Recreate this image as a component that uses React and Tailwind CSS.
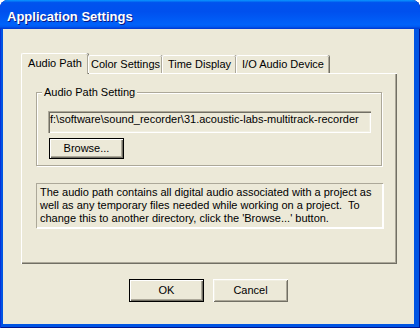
import { useState } from "react"

const tabs = ["Audio Path", "Color Settings", "Time Display", "I/O Audio Device"]

function Button({ children, isDefault, className = "" }) {
    return (
        <button
            className={`flex items-center justify-center bg-[#ece9d8] text-[11px] leading-[13px] text-black ${isDefault
                ? "border border-black shadow-[inset_1px_1px_0_#fff,inset_-1px_-1px_0_#716f64,inset_-2px_-2px_0_#aca899]"
                : "shadow-[inset_1px_1px_0_#fff,inset_-1px_-1px_0_#716f64,inset_2px_2px_0_#f1efe2,inset_-2px_-2px_0_#aca899]"
                } ${className}`}
        >
            {children}
        </button>
    )
}

export default function App() {
    const [active, setActive] = useState(0)
    const [path] = useState("f:\\software\\sound_recorder\\31.acoustic-labs-multitrack-recorder")

    return (
        <div className="h-[328px] w-[420px] overflow-hidden bg-white font-['Liberation_Sans',Arial,sans-serif]">
            <div className="flex h-full w-[420px] flex-col rounded-t-[8px] bg-[#0054e3] shadow-[inset_-1px_0_0_#00138c,inset_1px_0_0_#0831d9,inset_0_-1px_0_#00138c]">

                {/* title bar */}
                <div className="h-[29px] shrink-0 rounded-t-[8px] bg-[linear-gradient(180deg,#0997ff_0%,#0053ee_9%,#0050ee_40%,#0062fa_85%,#0058ef_93%,#003dd7_97%,#003dd7_100%)] pl-[7px] pt-[9px]">
                    <p className="text-[13px] font-bold leading-[15px] text-white [text-shadow:1px_1px_0_#0a1883]">Application Settings</p>
                </div>

                {/* client area */}
                <div className="ml-[3px] mr-[6px] mb-[4px] flex flex-1 flex-col bg-[#ece9d8] pl-[18px] pt-[24px]">

                    {/* tab strip */}
                    <div className="relative z-10 flex h-[20px] items-end">
                        {tabs.map((t, i) => (
                            <div
                                key={t}
                                onClick={() => setActive(i)}
                                className={`flex cursor-default items-start justify-center rounded-t-[2px] border-l border-t border-white bg-[#ece9d8] text-[11px] leading-[13px] text-black shadow-[inset_-1px_0_0_#aca899,1px_0_0_#716f64] ${i === active
                                    ? "-mb-[1px] h-[21px] pt-[3px]"
                                    : "h-[18px] pt-[2px]"
                                    } ${["w-[67px]", "w-[74px]", "w-[74px]", "w-[93px]"][i]}`}
                            >
                                {t}
                            </div>
                        ))}
                    </div>

                    {/* tab panel */}
                    <div className="flex h-[191px] w-[376px] flex-col border-l border-t border-white pt-[18px] pl-[14px] shadow-[inset_-1px_-1px_0_#716f64,inset_-2px_-2px_0_#aca899]">

                        {/* group box */}
                        <div className="relative flex w-[346px] flex-col border border-[#aca899] px-[11px] pt-[18px] pb-[6px] shadow-[inset_1px_1px_0_#fff,1px_1px_0_#fff]">
                            <span className="absolute -top-[7px] left-[5px] bg-[#ece9d8] px-[2px] text-[11px] leading-[13px] text-black">Audio Path Setting</span>

                            <div className="h-[22px] w-[323px] overflow-hidden whitespace-nowrap bg-[#ece9d8] pl-[2px] pt-[2px] text-[11px] leading-[13px] text-black shadow-[inset_1px_1px_0_#aca899,inset_2px_2px_0_#716f64,inset_-1px_-1px_0_#fff,inset_-2px_-2px_0_#f1efe2]">
                                {path}
                            </div>

                            <Button isDefault className="mt-[5px] ml-[1px] h-[21px] w-[75px]">Browse...</Button>
                        </div>

                        {/* description */}
                        <div className="mt-[17px] h-[45px] w-[347px] border-l border-t border-[#aca899] pl-[3px] pt-[2px] text-[11px] leading-[13px] text-black shadow-[inset_-1px_-1px_0_#fff,1px_1px_0_#fff]">
                            <p className="whitespace-pre">The audio path contains all digital audio associated with a project as</p>
                            <p className="whitespace-pre">{"well as any temporary files needed while working on a project.  To"}</p>
                            <p className="whitespace-pre">change this to another directory, click the 'Browse...' button.</p>
                        </div>
                    </div>

                    {/* dialog buttons */}
                    <div className="mt-[15px] flex justify-center gap-[9px] pr-[18px]">
                        <Button isDefault className="h-[23px] w-[75px]">OK</Button>
                        <Button className="h-[23px] w-[75px]">Cancel</Button>
                    </div>
                </div>
            </div>
        </div>
    )
}
